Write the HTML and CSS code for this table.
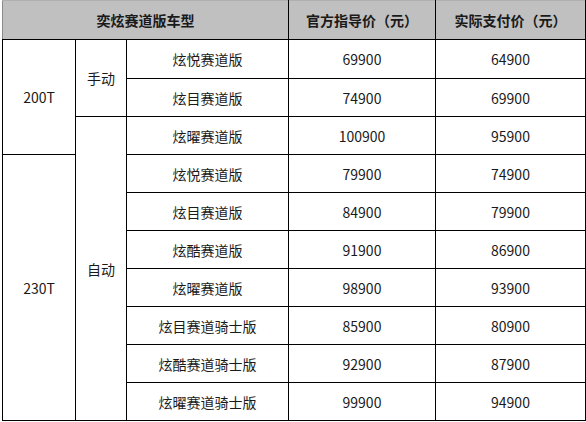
FILE: index.html
```html
<!DOCTYPE html>
<html lang="zh">
<head>
<meta charset="utf-8">
<link rel="stylesheet" href="styles.css">
</head>
<body>
<table class="price-table">
  <colgroup>
    <col class="c1"><col class="c2"><col class="c3"><col class="c4"><col class="c5">
  </colgroup>
  <thead>
    <tr class="head-row">
      <th colspan="3">奕炫赛道版车型</th>
      <th>官方指导价（元）</th>
      <th>实际支付价（元）</th>
    </tr>
  </thead>
  <tbody>
    <tr class="first-row">
      <td rowspan="3">200T</td>
      <td rowspan="2">手动</td>
      <td>炫悦赛道版</td><td>69900</td><td>64900</td>
    </tr>
    <tr><td>炫目赛道版</td><td>74900</td><td>69900</td></tr>
    <tr><td rowspan="8">自动</td><td>炫曜赛道版</td><td>100900</td><td>95900</td></tr>
    <tr><td rowspan="7">230T</td><td>炫悦赛道版</td><td>79900</td><td>74900</td></tr>
    <tr><td>炫目赛道版</td><td>84900</td><td>79900</td></tr>
    <tr><td>炫酷赛道版</td><td>91900</td><td>86900</td></tr>
    <tr><td>炫曜赛道版</td><td>98900</td><td>93900</td></tr>
    <tr><td>炫目赛道骑士版</td><td>85900</td><td>80900</td></tr>
    <tr><td>炫酷赛道骑士版</td><td>92900</td><td>87900</td></tr>
    <tr><td>炫曜赛道骑士版</td><td>99900</td><td>94900</td></tr>
  </tbody>
</table>
</body>
</html>
```
FILE: styles.css
```css
html, body {
  margin: 0;
  padding: 0;
  background: #fff;
}
.price-table {
  margin-left: 2px;
  border-collapse: collapse;
  table-layout: fixed;
  width: 583px;
  font-family: "Microsoft YaHei", "Noto Sans CJK SC", "Noto Sans", sans-serif;
  font-size: 14px;
  color: #1a1a1a;
}
.c1 { width: 73px; }
.c2 { width: 51px; }
.c3 { width: 162px; }
.c4 { width: 147px; }
.c5 { width: 150px; }
.price-table th,
.price-table td {
  border: 1px solid #000;
  text-align: center;
  vertical-align: middle;
  padding: 0;
}
.price-table th {
  background: #c0c0c0;
  font-weight: bold;
  border-top-color: #b0b0b0;
  color: #1a1a1a;
}
.price-table th:first-child {
  border-left-color: #8a8a8a;
}
.head-row { height: 39px; }
.first-row { height: 39px; }
.price-table tbody tr { height: 38px; }
.price-table tbody tr.first-row { height: 39px; }
```
